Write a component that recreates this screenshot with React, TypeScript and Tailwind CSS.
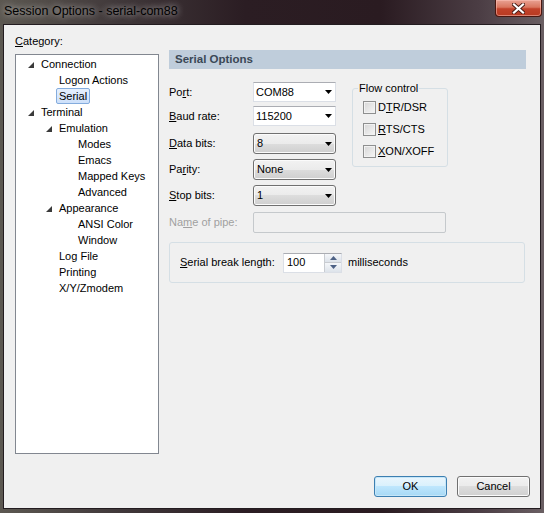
import React from 'react';

type TreeNode = { label: string; level: 0 | 1 | 2; open?: boolean; selected?: boolean };

const tree: TreeNode[] = [
  { label: 'Connection', level: 0, open: true },
  { label: 'Logon Actions', level: 1 },
  { label: 'Serial', level: 1, selected: true },
  { label: 'Terminal', level: 0, open: true },
  { label: 'Emulation', level: 1, open: true },
  { label: 'Modes', level: 2 },
  { label: 'Emacs', level: 2 },
  { label: 'Mapped Keys', level: 2 },
  { label: 'Advanced', level: 2 },
  { label: 'Appearance', level: 1, open: true },
  { label: 'ANSI Color', level: 2 },
  { label: 'Window', level: 2 },
  { label: 'Log File', level: 1 },
  { label: 'Printing', level: 1 },
  { label: 'X/Y/Zmodem', level: 1 },
];

const indent = ['pl-[12px]', 'pl-[30px]', 'pl-[49px]'];

const U: React.FC<{ children: React.ReactNode }> = ({ children }) => (
  <span className="underline decoration-1 underline-offset-[1px]">{children}</span>
);

const DropArrow = () => (
  <svg width="7" height="4" viewBox="0 0 7 4">
    <polygon points="0,0 7,0 3.5,4" fill="#000" />
  </svg>
);

const Expander = () => (
  <svg width="6" height="6" viewBox="0 0 6 6" className="mt-[2px]">
    <polygon points="6,0 6,6 0,6" fill="#3a3a3a" />
  </svg>
);

const EditCombo: React.FC<{ value: string }> = ({ value }) => (
  <div className="w-[83px] h-[20px] bg-white border border-[#dbdfe6] border-t-[#abadb3] flex items-center justify-between pl-[2px] pr-[3px]">
    <span>{value}</span>
    <DropArrow />
  </div>
);

const ListCombo: React.FC<{ value: string }> = ({ value }) => (
  <div className="w-[83px] h-[21px] rounded-[3px] border border-[#707070] bg-[linear-gradient(#f2f2f2_0%,#ebebeb_50%,#dddddd_50%,#cfcfcf_100%)] shadow-[inset_0_0_0_1px_#fbfbfb] flex items-center justify-between pl-[3px] pr-[3px]">
    <span>{value}</span>
    <DropArrow />
  </div>
);

const Check: React.FC<{ children: React.ReactNode }> = ({ children }) => (
  <div className="flex items-center h-[13px]">
    <span className="w-[13px] h-[13px] border border-[#8e8f8f] bg-[linear-gradient(135deg,#d6d6d6,#f6f6f6)] shadow-[inset_0_0_0_1px_#f2f2f2]" />
    <span className="ml-[2px]">{children}</span>
  </div>
);

const Row: React.FC<{ label: React.ReactNode; className?: string; children: React.ReactNode }> = ({ label, className, children }) => (
  <div className={`flex items-center ${className ?? ''}`}>
    <div className="w-[84px]">{label}</div>
    {children}
  </div>
);

const Button: React.FC<{ label: string; primary?: boolean }> = ({ label, primary }) => (
  <button
    className={
      primary
        ? 'w-[73px] h-[21px] rounded-[3px] border border-[#3c7fb1] bg-[linear-gradient(#eaf6fd_0%,#d9f0fc_50%,#bee6fd_50%,#a7d9f5_100%)] shadow-[inset_0_0_0_1px_#c6e6f8]'
        : 'w-[73px] h-[21px] rounded-[3px] border border-[#707070] bg-[linear-gradient(#f2f2f2_0%,#ebebeb_50%,#dddddd_50%,#cfcfcf_100%)] shadow-[inset_0_0_0_1px_#fbfbfb]'
    }
  >
    {label}
  </button>
);

const App: React.FC = () => {
  return (
    <div className="w-[544px] h-[513px] flex flex-col px-[3px] pb-[4px] bg-[linear-gradient(90deg,#5c5851_0%,#40383a_22%,#2b1d23_45%,#2a1b21_70%,#4b3d44_88%,#6a5f63_100%)] font-['Liberation_Sans',Arial,sans-serif] text-[11px] leading-[13px] text-black">
      {/* title bar */}
      <div className="h-[24px] flex items-start justify-between">
        <div className="pl-[1px] pt-[4px] text-[12.5px] leading-[15px] text-black [text-shadow:0_0_6px_rgba(255,255,255,0.55),0_0_10px_rgba(255,255,255,0.35)]">
          Session Options - serial-com88
        </div>
        <div className="w-[47px] h-[17px] mr-[-1px] rounded-b-[4px] border border-t-0 border-[#4a1710] bg-[linear-gradient(#e9a293_0%,#d9765f_45%,#c2422a_55%,#b83a22_100%)] shadow-[inset_0_0_0_1px_rgba(255,200,190,0.5)] flex items-center justify-center">
          <svg width="13" height="11" viewBox="0 0 13 11">
            <path d="M2 1.5 L11 9.5 M11 1.5 L2 9.5" stroke="#4a1b14" strokeWidth="4" strokeLinecap="square" />
            <path d="M2 1.5 L11 9.5 M11 1.5 L2 9.5" stroke="#ffffff" strokeWidth="2.2" strokeLinecap="square" />
          </svg>
        </div>
      </div>

      {/* client area */}
      <div className="flex-1 flex flex-col bg-[#f0f0f0] border border-[#231c20]">
        <div className="flex items-start pl-[11px]">
          <div className="pt-[10px] w-[144px]">
            <div>
              <U>C</U>ategory:
            </div>
            <div className="mt-[6px] h-[400px] border border-[#828790] bg-white pt-[1px]">
              {tree.map((n) => (
                <div key={n.label} className={`flex items-center h-[16px] ${indent[n.level]}`}>
                  <span className="w-[13px] h-[16px] flex items-center">{n.open && <Expander />}</span>
                  {n.selected ? (
                    <span className="-ml-[3px] px-[2px] h-[16px] leading-[14px] rounded-[2px] border border-[#84acdd] bg-[linear-gradient(#e6f0fd,#cde0fa)]">
                      {n.label}
                    </span>
                  ) : (
                    <span>{n.label}</span>
                  )}
                </div>
              ))}
            </div>
          </div>

          <div className="mt-[25px] ml-[10px] w-[357px]">
            <div className="h-[19px] bg-[#bfcddb] pl-[6px] flex items-center font-bold text-[11.5px] text-[#3a4856]">
              Serial Options
            </div>

            <div className="flex mt-[13px]">
              <div className="w-[167px]">
                <Row label={<>Po<U>r</U>t:</>} className="h-[20px]">
                  <EditCombo value="COM88" />
                </Row>
                <Row label={<><U>B</U>aud rate:</>} className="h-[20px] mt-[4px]">
                  <EditCombo value="115200" />
                </Row>
                <Row label={<><U>D</U>ata bits:</>} className="h-[21px] mt-[7px]">
                  <ListCombo value="8" />
                </Row>
                <Row label={<>Pa<U>r</U>ity:</>} className="h-[21px] mt-[5px]">
                  <ListCombo value="None" />
                </Row>
                <Row label={<><U>S</U>top bits:</>} className="h-[21px] mt-[5px]">
                  <ListCombo value="1" />
                </Row>
              </div>

              <div className="relative mt-[6px] ml-[16px] w-[96px] h-[79px] border border-[#d5dfe5] rounded-[3px]">
                <span className="absolute left-[5px] -top-[7px] bg-[#f0f0f0] px-px">Flow control</span>
                <div className="flex flex-col gap-[9px] pl-[10px] pt-[12px]">
                  <Check>D<U>T</U>R/DSR</Check>
                  <Check><U>R</U>TS/CTS</Check>
                  <Check><U>X</U>ON/XOFF</Check>
                </div>
              </div>
            </div>

            <Row label={<span className="text-[#a0a0a0]">Na<U>m</U>e of pipe:</span>} className="h-[21px] mt-[6px]">
              <div className="w-[193px] h-[21px] border border-[#c5c9cc] rounded-[2px] bg-[#f0f0f0]" />
            </Row>

            <div className="mt-[9px] w-[356px] h-[41px] border border-[#d5dfe5] rounded-[3px] flex items-center pl-[10px]">
              <span className="w-[103px]">
                <U>S</U>erial break length:
              </span>
              <div className="w-[59px] h-[20px] bg-white border border-[#dbdfe6] border-t-[#abadb3] flex items-stretch">
                <span className="flex-1 pl-[3px] flex items-center">100</span>
                <div className="w-[17px] flex flex-col border-l border-[#c9ccd1]">
                  <div className="flex-1 flex items-center justify-center bg-[linear-gradient(#f5f7fa,#dde3ea)] border-b border-[#c9ccd1]">
                    <svg width="7" height="4" viewBox="0 0 7 4">
                      <polygon points="3.5,0 7,4 0,4" fill="#4d6185" />
                    </svg>
                  </div>
                  <div className="flex-1 flex items-center justify-center bg-[linear-gradient(#f5f7fa,#dde3ea)]">
                    <svg width="7" height="4" viewBox="0 0 7 4">
                      <polygon points="0,0 7,0 3.5,4" fill="#4d6185" />
                    </svg>
                  </div>
                </div>
              </div>
              <span className="ml-[6px]">milliseconds</span>
            </div>
          </div>
        </div>

        <div className="mt-auto flex justify-end gap-[10px] pr-[10px] pb-[11px]">
          <Button label="OK" primary />
          <Button label="Cancel" />
        </div>
      </div>
    </div>
  );
};

export default App;
